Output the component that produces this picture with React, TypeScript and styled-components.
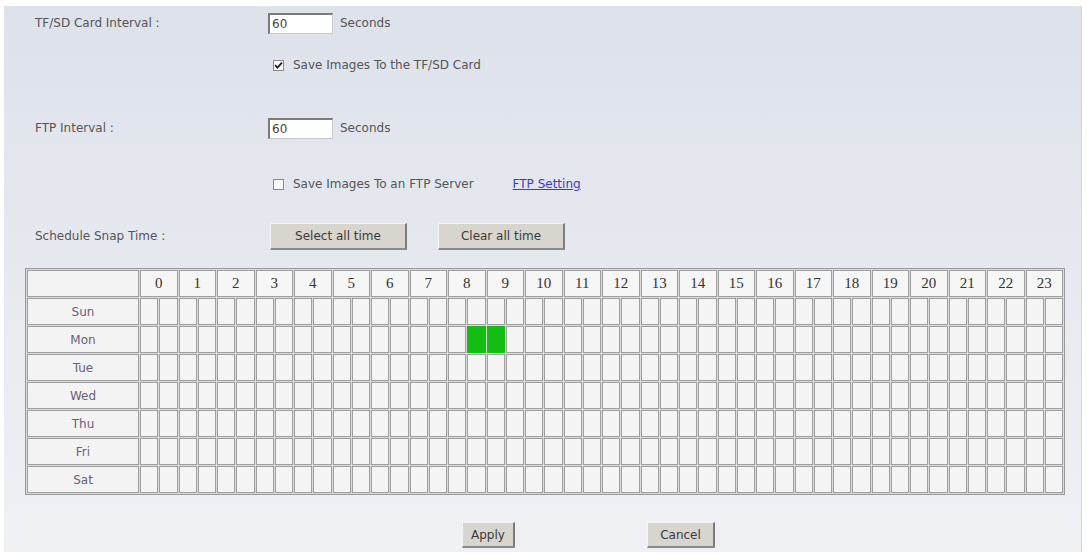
import styled, { createGlobalStyle } from "styled-components";

const GlobalStyle = createGlobalStyle`
  html, body {
    margin: 0;
    padding: 0;
    background: #ffffff;
  }
  body {
    font-family: "DejaVu Sans", "Liberation Sans", sans-serif;
    font-size: 12px;
    color: #4d4d4d;
  }
`;

const DAYS = ["Sun", "Mon", "Tue", "Wed", "Thu", "Fri", "Sat"];
const HOURS = Array.from({ length: 24 }, (_, i) => i);

// half-hour slots that are switched on: [day, slot]
const selected: Array<[number, number]> = [
  [1, 17],
  [1, 18],
];

const isOn = (day: number, slot: number) =>
  selected.some(([d, s]) => d === day && s === slot);

function CheckBox({ checked }: { checked: boolean }) {
  return (
    <Box>
      {checked && (
        <svg width="9" height="9" viewBox="0 0 9 9">
          <path d="M1 4.2 L3.4 6.6 L8 1.6" stroke="#222" strokeWidth="1.8" fill="none" />
        </svg>
      )}
    </Box>
  );
}

export default function App() {
  return (
    <>
      <GlobalStyle />
      <Panel>
        <Row $top={2}>
          <Label>TF/SD Card Interval :</Label>
          <NumberInput defaultValue="60" />
          <Unit>Seconds</Unit>
        </Row>
        <Row $top={12}>
          <Label />
          <CheckLine>
            <CheckBox checked />
            <span>Save Images To the TF/SD Card</span>
          </CheckLine>
        </Row>
        <Row $top={33}>
          <Label>FTP Interval :</Label>
          <NumberInput defaultValue="60" />
          <Unit>Seconds</Unit>
        </Row>
        <Row $top={26}>
          <Label />
          <CheckLine>
            <CheckBox checked={false} />
            <span>Save Images To an FTP Server</span>
            <SettingLink href="#">FTP Setting</SettingLink>
          </CheckLine>
        </Row>
        <Row $top={22}>
          <Label>Schedule Snap Time :</Label>
          <Buttons>
            <Button $width={137}>Select all time</Button>
            <Button $width={127}>Clear all time</Button>
          </Buttons>
        </Row>

        <Schedule>
          <colgroup>
            <col style={{ width: 112 }} />
            {HOURS.map((h) => (
              <col key={h} span={2} />
            ))}
          </colgroup>
          <tbody>
            <tr>
              <DayCell />
              {HOURS.map((h) => (
                <HourCell key={h} colSpan={2}>
                  {h}
                </HourCell>
              ))}
            </tr>
            {DAYS.map((day, d) => (
              <tr key={day}>
                <DayCell>{day}</DayCell>
                {Array.from({ length: 48 }, (_, s) => (
                  <Slot key={s} $on={isOn(d, s)} />
                ))}
              </tr>
            ))}
          </tbody>
        </Schedule>

        <Footer>
          <Button $width={53} $height={26}>Apply</Button>
          <Button $width={68} $height={26}>Cancel</Button>
        </Footer>
      </Panel>
    </>
  );
}

const Panel = styled.div`
  margin: 6px 5px 0 4px;
  height: 546px;
  box-sizing: border-box;
  padding: 0 0 0 21px;
  background: linear-gradient(#dde1ea, #f0f1f5);
  border-right: 1px solid #d3d6de;
  overflow: hidden;
`;

const Row = styled.div<{ $top: number }>`
  display: flex;
  align-items: center;
  height: 30px;
  margin-top: ${(p) => p.$top}px;
  padding-left: 10px;
`;

const Label = styled.div`
  width: 233px;
  flex: none;
  color: #555555;
`;

const NumberInput = styled.input`
  width: 65px;
  height: 21px;
  box-sizing: border-box;
  padding: 0 2px;
  border: 1px solid #c8c8c8;
  border-top: 2px solid #7a7a7a;
  border-left: 2px solid #7a7a7a;
  background: #ffffff;
  font-family: "DejaVu Sans", sans-serif;
  font-size: 12px;
  color: #444;
  outline: none;
`;

const Unit = styled.span`
  margin-left: 7px;
  color: #555555;
`;

const CheckLine = styled.div`
  display: flex;
  align-items: center;
  margin-left: 5px;
  color: #555555;
`;

const Box = styled.span`
  width: 11px;
  height: 11px;
  margin-right: 9px;
  box-sizing: border-box;
  border: 1px solid #8a8a8a;
  background: #fafafa;
  display: flex;
  align-items: center;
  justify-content: center;
`;

const SettingLink = styled.a`
  margin-left: 39px;
  color: #3b3bc4;
  text-decoration: underline;
`;

const Buttons = styled.div`
  display: flex;
  gap: 31px;
  margin-left: 2px;
`;

const Button = styled.button<{ $width: number; $height?: number }>`
  width: ${(p) => p.$width}px;
  height: ${(p) => p.$height ?? 27}px;
  padding: 0;
  box-sizing: border-box;
  background: #d8d5cf;
  border: 1px solid #f4f4f4;
  border-right: 2px solid #7c7c7c;
  border-bottom: 2px solid #8a8a8a;
  font-family: "DejaVu Sans", sans-serif;
  font-size: 12px;
  color: #3a3a3a;
`;

const Schedule = styled.table`
  margin-top: 17px;
  width: 1040px;
  table-layout: fixed;
  border-collapse: separate;
  border-spacing: 1px;
  border: 1px solid #9a9a9a;
  background: #d9d9d9;
`;

const DayCell = styled.td`
  height: 25px;
  padding: 0;
  border: 1px solid #a0a0a0;
  background: #f3f3f3;
  text-align: center;
  color: #6c6078;
  font-size: 12px;
`;

const HourCell = styled.td`
  height: 25px;
  padding: 0;
  border: 1px solid #a0a0a0;
  background: #f6f6f6;
  text-align: center;
  font-family: "Liberation Serif", serif;
  font-size: 15px;
  color: #333;
`;

const Slot = styled.td<{ $on: boolean }>`
  height: 25px;
  padding: 0;
  border: 1px solid ${(p) => (p.$on ? "#14bd14" : "#a0a0a0")};
  background: ${(p) => (p.$on ? "#14bd14" : "#f4f4f4")};
`;

const Footer = styled.div`
  display: flex;
  gap: 132px;
  margin-top: 27px;
  padding-left: 437px;
`;
